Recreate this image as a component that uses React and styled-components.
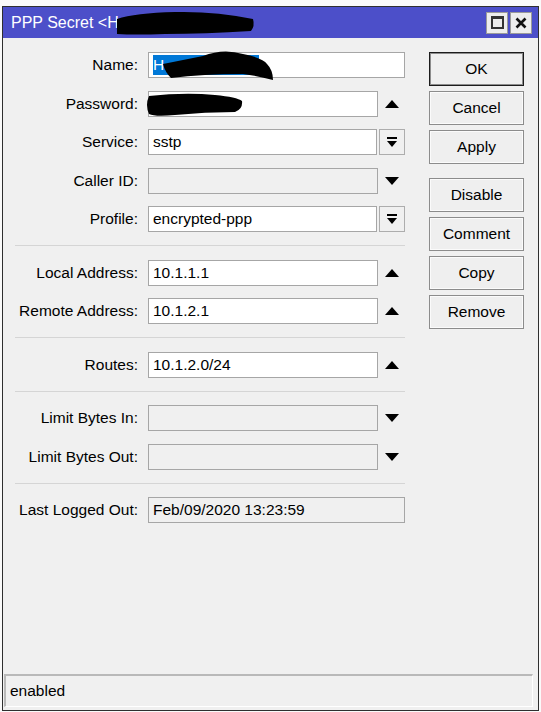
import React from 'react'
import styled, { createGlobalStyle } from 'styled-components'

const Global = createGlobalStyle`
    html, body {
        margin: 0;
        background: #fafafa;
        font-family: "Liberation Sans", Arial, sans-serif;
        color: #000;
    }
`

const Window = styled.div`
    margin: 6px 0 0 2px;
    width: 537px;
    height: 705px;
    box-sizing: border-box;
    border: 1px solid #2f2f2f;
    background: #f0f0f0;
    display: flex;
    flex-direction: column;
`

const TitleBar = styled.div`
    height: 31px;
    flex-shrink: 0;
    background: #4c4fc9;
    display: flex;
    align-items: center;
    padding: 0 6px 0 8px;
    color: #fff;
    font-size: 16px;
`

const TitleText = styled.span`
    display: flex;
    align-items: center;
    white-space: nowrap;
`

const TitleButtons = styled.div`
    margin-left: auto;
    display: flex;
    gap: 2px;
`

const TitleButton = styled.div`
    width: 22px;
    height: 22px;
    box-sizing: border-box;
    background: #ededed;
    border: 1px solid #9a9a9a;
    display: flex;
    align-items: center;
    justify-content: center;
`

const MaxBox = styled.div`
    width: 13px;
    height: 13px;
    box-sizing: border-box;
    border: 2px solid #333;
    border-top-width: 3px;
`

const Body = styled.div`
    flex: 1;
    display: flex;
    padding-top: 14px;
`

const Form = styled.div`
    width: 402px;
    display: flex;
    flex-direction: column;
    gap: 12.5px;
`

const Row = styled.div`
    display: flex;
    align-items: center;
    height: 26px;
`

const Label = styled.div`
    width: 135px;
    margin-right: 10px;
    text-align: right;
    font-size: 15.5px;
    white-space: nowrap;
`

const Box = styled.div`
    position: relative;
    width: ${p => p.$width}px;
    height: 26px;
    box-sizing: border-box;
    border: 1px solid #a6a6a6;
    background: ${p => (p.$grey ? '#f0f0f0' : '#fff')};
    padding: 0 4px;
    font-size: 15.5px;
    line-height: 24px;
    white-space: nowrap;
`

const ArrowSlot = styled.div`
    width: 27px;
    display: flex;
    justify-content: center;
    align-items: center;
`

const SelectButton = styled.div`
    margin-left: 2px;
    width: 26px;
    height: 26px;
    box-sizing: border-box;
    border: 1px solid #adadad;
    background: #f0f0f0;
    display: flex;
    align-items: center;
    justify-content: center;
`

const Selected = styled.span`
    display: inline-block;
    width: 106px;
    height: 20px;
    line-height: 20px;
    margin-top: 2px;
    background: #0078d7;
    color: #fff;
    vertical-align: top;
`

const Blob = styled.svg`
    position: absolute;
    left: ${p => p.$left}px;
    top: ${p => p.$top}px;
`

const Separator = styled.div`
    height: 1px;
    background: #d5d5d5;
    margin: 0.75px 0 0.75px 12px;
`

const Buttons = styled.div`
    margin-left: 24px;
    display: flex;
    flex-direction: column;
    gap: 5px;
`

const Button = styled.div`
    width: 95px;
    height: 34px;
    box-sizing: border-box;
    border: 1px solid ${p => (p.$default ? '#1c1c1c' : '#8c8c8c')};
    box-shadow: inset 0 0 0 1px ${p => (p.$default ? '#8c8c8c' : '#fbfbfb')};
    background: #efefef;
    display: flex;
    align-items: center;
    justify-content: center;
    font-size: 15.5px;
    margin-top: ${p => (p.$spaced ? 9 : 0)}px;
`

const StatusBar = styled.div`
    margin: 0 5px 3px 1px;
    height: 33px;
    box-sizing: border-box;
    border-top: 2px solid #b9b9b9;
    border-left: 2px solid #b9b9b9;
    border-right: 1px solid #fff;
    border-bottom: 1px solid #fff;
    padding-left: 4px;
    display: flex;
    align-items: center;
    font-size: 15.5px;
`

const UpArrow = () => (
    <svg width="14" height="8" viewBox="0 0 14 8">
        <polygon points="0,8 7,0 14,8" fill="#000" />
    </svg>
)

const DownArrow = () => (
    <svg width="14" height="8" viewBox="0 0 14 8">
        <polygon points="0,0 14,0 7,8" fill="#000" />
    </svg>
)

const SelectIcon = () => (
    <svg width="10" height="11" viewBox="0 0 10 11">
        <rect x="0" y="0" width="10" height="2" fill="#000" />
        <polygon points="0,4 10,4 5,10" fill="#000" />
    </svg>
)

const CloseIcon = () => (
    <svg width="12" height="12" viewBox="0 0 12 12">
        <path d="M1.5 1.5 L10.5 10.5 M10.5 1.5 L1.5 10.5" stroke="#111" strokeWidth="2.6" />
    </svg>
)

const Field = ({ label, value, width = 230, grey, arrow, select, children }) => (
    <Row>
        <Label>{label}</Label>
        <Box $width={width} $grey={grey}>
            {value}
            {children}
        </Box>
        {arrow && <ArrowSlot>{arrow === 'up' ? <UpArrow /> : <DownArrow />}</ArrowSlot>}
        {select && (
            <SelectButton>
                <SelectIcon />
            </SelectButton>
        )}
    </Row>
)

const App = () => {
    return (
        <>
            <Global />
            <Window>
                <TitleBar>
                    <TitleText>
                        PPP Secret &lt;H
                        <svg width="140" height="26" viewBox="0 0 140 26" style={{ marginLeft: -4 }}>
                            <path d="M2 9 Q20 3 60 2 Q100 1 138 9 Q140 16 136 21 Q90 24 50 24 Q20 25 2 24 Z" fill="#000" />
                        </svg>
                    </TitleText>
                    <TitleButtons>
                        <TitleButton>
                            <MaxBox />
                        </TitleButton>
                        <TitleButton>
                            <CloseIcon />
                        </TitleButton>
                    </TitleButtons>
                </TitleBar>

                <Body>
                    <Form>
                        <Field label="Name:" width={257}>
                            <Selected>H</Selected>
                            <Blob $left={14} $top={-3} width="110" height="31" viewBox="0 0 110 31">
                                <path d="M0 14 Q20 10 40 6 Q60 -2 80 4 Q100 8 104 14 Q110 20 110 30 Q95 26 80 24 Q40 24 8 28 Q2 22 0 14 Z" fill="#000" />
                            </Blob>
                        </Field>
                        <Field label="Password:" arrow="up">
                            <Blob $left={-4} $top={1} width="98" height="24" viewBox="0 0 98 24">
                                <path d="M4 3 Q40 -1 70 2 Q92 4 97 8 Q98 16 90 19 Q60 19 30 22 Q10 24 4 21 Q0 12 4 3 Z" fill="#000" />
                            </Blob>
                        </Field>
                        <Field label="Service:" value="sstp" width={229} select />
                        <Field label="Caller ID:" grey arrow="down" />
                        <Field label="Profile:" value="encrypted-ppp" width={229} select />
                        <Separator />
                        <Field label="Local Address:" value="10.1.1.1" arrow="up" />
                        <Field label="Remote Address:" value="10.1.2.1" arrow="up" />
                        <Separator />
                        <Field label="Routes:" value="10.1.2.0/24" arrow="up" />
                        <Separator />
                        <Field label="Limit Bytes In:" grey arrow="down" />
                        <Field label="Limit Bytes Out:" grey arrow="down" />
                        <Separator />
                        <Field label="Last Logged Out:" value="Feb/09/2020 13:23:59" width={257} grey />
                    </Form>

                    <Buttons>
                        <Button $default>OK</Button>
                        <Button>Cancel</Button>
                        <Button>Apply</Button>
                        <Button $spaced>Disable</Button>
                        <Button>Comment</Button>
                        <Button>Copy</Button>
                        <Button>Remove</Button>
                    </Buttons>
                </Body>

                <StatusBar>enabled</StatusBar>
            </Window>
        </>
    )
}

export default App
